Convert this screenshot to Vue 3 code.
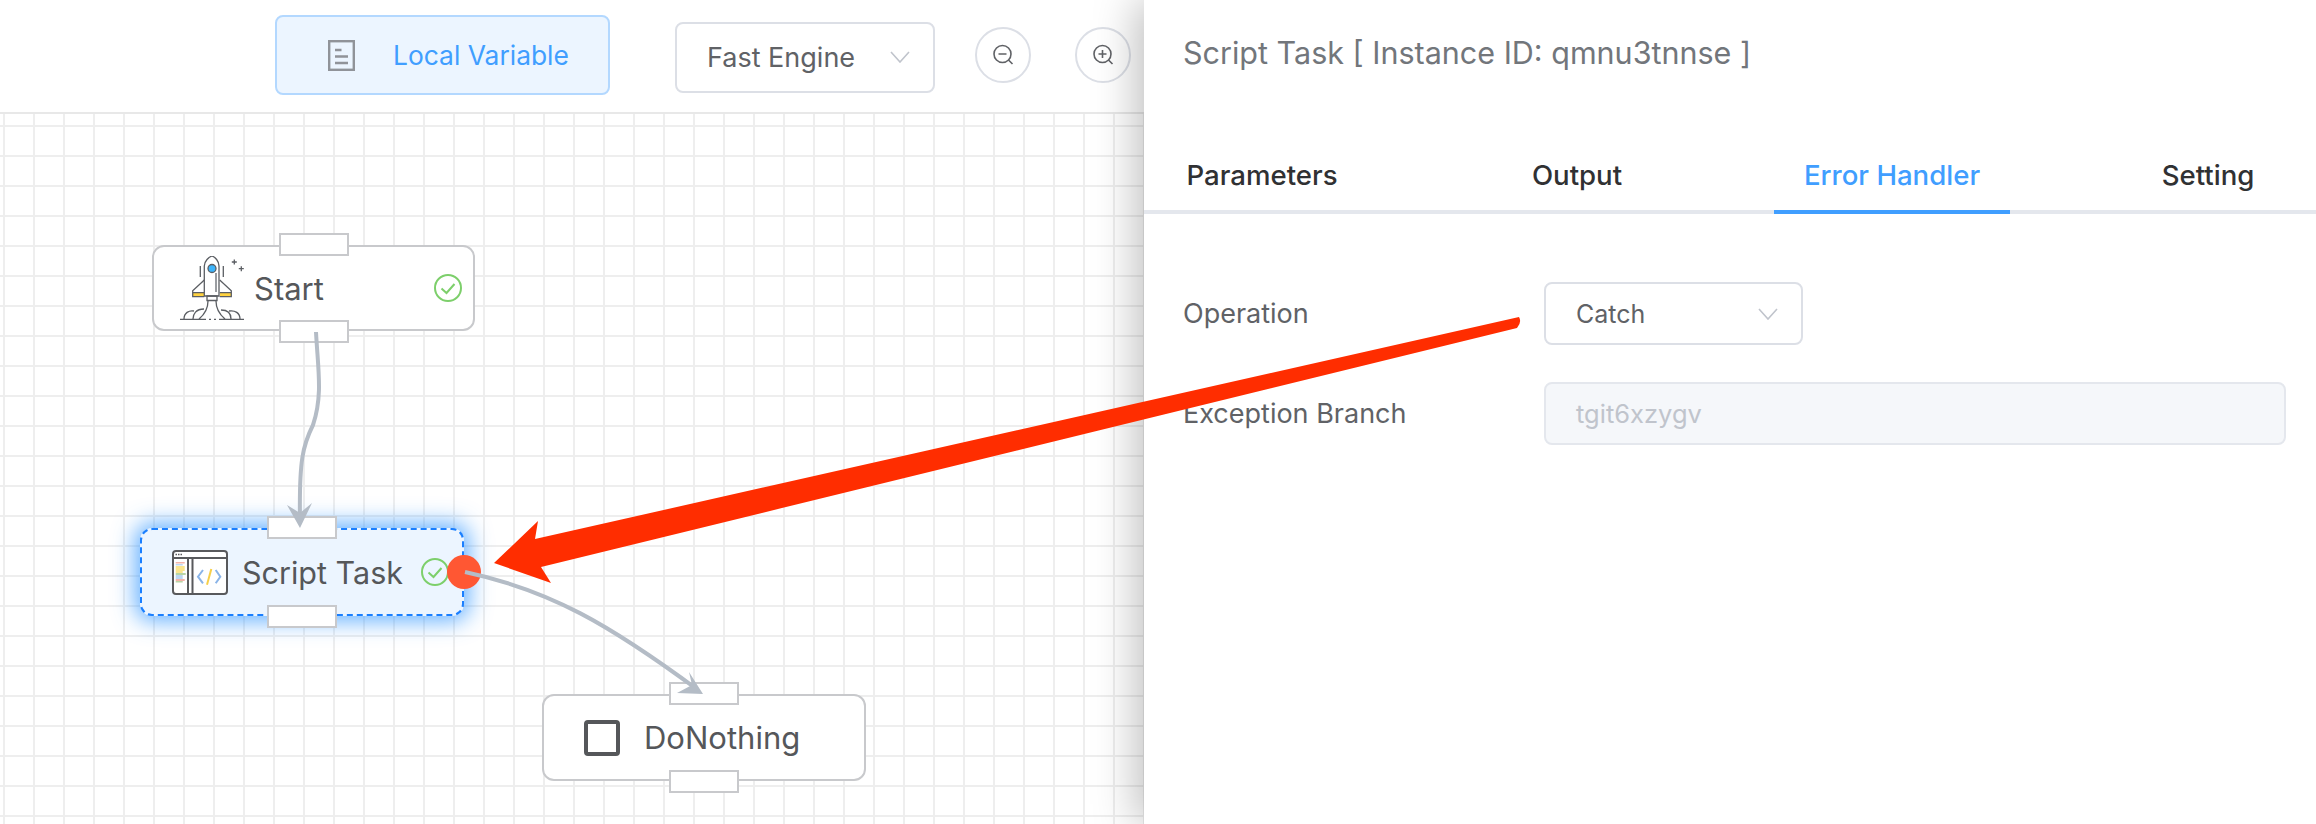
<template>
  <div class="page">
    <header class="toolbar">
      <button class="var-btn">
        <svg class="var-icon" width="27" height="31" viewBox="0 0 27 31" fill="none" stroke="#909399" stroke-width="2.4">
          <rect x="1.2" y="1.2" width="24.6" height="28.6" />
          <path d="M7 10h6.500M7 16.500h13M7 23h13" />
        </svg>
        <span>Local Variable</span>
      </button>
      <div class="select engine">
        <span>Fast Engine</span>
        <svg width="20" height="12" viewBox="0 0 20 12" fill="none" stroke="#c0c4cc" stroke-width="1.6">
          <path d="M1 1l9 10 9-10" />
        </svg>
      </div>
      <div class="round-btn">
        <svg width="22" height="22" viewBox="0 0 22 22" fill="none" stroke="#606266" stroke-width="1.6">
          <circle cx="10.500" cy="10" r="8.500" />
          <path d="M6.500 10h8M16.500 16l4 4" />
        </svg>
      </div>
      <div class="round-btn second">
        <svg width="22" height="22" viewBox="0 0 22 22" fill="none" stroke="#606266" stroke-width="1.6">
          <circle cx="10.500" cy="10" r="8.500" />
          <path d="M6.500 10h8M10.500 6v8M16.500 16l4 4" />
        </svg>
      </div>
    </header>

    <main class="canvas">
      <div class="node start">
        <span class="port top"></span>
        <svg class="node-icon" width="64" height="64" viewBox="0 0 64 64" fill="none" stroke="#5b5e63" stroke-width="1.3">
          <path d="M13 37h11v4H13zM40 37h11v4H40z" fill="#ffd23f" stroke="none" />
          <path d="M24.300 24L12.700 34.700v6h11.600M39.700 24l11.600 10.700v6H39.700" />
          <path d="M24.300 40V10C24.300 5 29 1 32 0c3 1 7 5 7 10v30z" fill="#fff" />
          <path d="M12.700 36.700h11.600M39.700 36.700h11.600" />
          <path d="M36 17v19" stroke-width="2" stroke="#9a9da1" />
          <circle cx="32" cy="12.500" r="4" fill="#3cb4fb" />
          <path d="M20.300 10v11M43.300 10v11M27 40h10v4.500H27zM54.300 3.500v5M51.800 6h5M61.300 10.200v5M58.800 12.700h5" />
          <path d="M28 45c0 8-3 13-9 18M36 45c0 8 3 13 9 18M0 63.300h26M29 63.300h2M34 63.300h2M39 63.300h25" />
          <path d="M4 63c0-6 5-9 10-8M13 63c0-5 3-10 11-10M51 63c0-5-3-9-10-9M60 63c0-6-5-9-11-8" />
        </svg>
        <span class="node-name">Start</span>
        <svg class="check" width="28" height="28" viewBox="0 0 28 28" fill="none" stroke="#7dcf6b" stroke-width="2">
          <circle cx="14" cy="14" r="13" />
          <path d="M7.500 14.500l5 4.500 8-9" />
        </svg>
        <span class="port bottom"></span>
      </div>

      <div class="node task">
        <span class="port top"></span>
        <svg class="node-icon" width="56" height="45" viewBox="0 0 56 45" fill="none" stroke="#58595c" stroke-width="2">
          <rect x="1" y="1" width="54" height="43" rx="3" fill="#fff" />
          <path d="M1 8h54M16 8v36M20.500 8v36" />
          <path d="M3.700 12h9v1.500h-9z" fill="#f4b4a8" stroke="none" />
          <path d="M3.700 14h7v1.500h-7z" fill="#bcd7f3" stroke="none" />
          <path d="M3.700 16h9v5h-9zM3.700 21h7v2h-7z" fill="#fbe58e" stroke="none" />
          <path d="M3.700 23h10v2h-10z" fill="#b9d5a6" stroke="none" />
          <path d="M3.700 25h7v4h-7z" fill="#bcd7f3" stroke="none" />
          <path d="M3.700 29h9v2h-9z" fill="#f4b4a8" stroke="none" />
          <path d="M3.700 31h7v1.500h-7z" fill="#b9d5a6" stroke="none" />
          <path d="M3.500 4.500h1.500M6 4.500h1.500M8.500 4.500h1.500" stroke-width="1.500" />
          <path d="M31 20l-5 6.700 5 6.600M43.700 20l4.600 6.700-4.600 6.600" stroke="#8ab4e8" stroke-width="2" />
          <path d="M39.300 19L35 34.700" stroke="#f6cf4a" stroke-width="2" />
        </svg>
        <span class="node-name">Script Task</span>
        <svg class="check" width="28" height="28" viewBox="0 0 28 28" fill="none" stroke="#7dcf6b" stroke-width="2">
          <circle cx="14" cy="14" r="13" />
          <path d="M7.500 14.500l5 4.500 8-9" />
        </svg>
        <span class="dot"></span>
        <span class="port bottom"></span>
      </div>

      <div class="node nothing">
        <span class="port top"></span>
        <span class="square"></span>
        <span class="node-name">DoNothing</span>
        <span class="port bottom"></span>
      </div>

      <svg class="edges" width="1144" height="710" viewBox="0 114 1144 710" fill="none">
        <path d="M316 332C318 370 323 395 313 425C303 445 299 460 300 520" stroke="#b4bcc6" stroke-width="4" />
        <path d="M300 528L287 505L300 513L312 503z" fill="#b4bcc6" />
        <path d="M465 572C550 590 610 625 698 690" stroke="#b4bcc6" stroke-width="4" />
        <path d="M703 694L677 693L692 685L689 672z" fill="#b4bcc6" />
      </svg>
    </main>

    <aside class="drawer">
      <h2 class="drawer-title">Script Task [ Instance ID: qmnu3tnnse ]</h2>
      <nav class="tabs">
        <div v-for="tab in tabs" :key="tab" class="tab" :class="{ active: tab === activeTab }">{{ tab }}</div>
      </nav>
      <div class="form">
        <div class="form-row">
          <label>Operation</label>
          <div class="select catch">
            <span>Catch</span>
            <svg width="20" height="12" viewBox="0 0 20 12" fill="none" stroke="#c0c4cc" stroke-width="1.6">
              <path d="M1 1l9 10 9-10" />
            </svg>
          </div>
        </div>
        <div class="form-row">
          <label>Exception Branch</label>
          <div class="input-disabled">tgit6xzygv</div>
        </div>
      </div>
    </aside>

    <!-- annotation drawn on top of the screenshot -->
    <svg class="annotation" width="2316" height="824" viewBox="0 0 2316 824">
      <path d="M494 563L538 521L535 539L1519 317Q1522 322 1517 328L541 567L551 583z" fill="#ff2d00" />
    </svg>
  </div>
</template>

<script setup>
const tabs = ['Parameters', 'Output', 'Error Handler', 'Setting']
const activeTab = 'Error Handler'
</script>

<style>
html,
body {
  margin: 0;
  background: #fff;
}
</style>

<style scoped>
.page {
  position: relative;
  width: 2316px;
  height: 824px;
  overflow: hidden;
  font-family: Inter, "Noto Sans", sans-serif;
  color: #606266;
  background: #fff;
}

.toolbar {
  display: flex;
  align-items: center;
  height: 112px;
  padding-left: 275px;
  border-bottom: 2px solid #e8e8e8;
}

.var-btn {
  display: flex;
  align-items: center;
  width: 335px;
  height: 80px;
  margin-top: -2px;
  padding: 0 0 0 51px;
  box-sizing: border-box;
  background: #ecf5ff;
  border: 2px solid #b3d8ff;
  border-radius: 8px;
  color: #409eff;
  font: 400 26.400px Inter, sans-serif;
}

.var-btn span {
  margin-left: 38px;
}

.select {
  display: flex;
  align-items: center;
  justify-content: space-between;
  box-sizing: border-box;
  background: #fff;
  border: 2px solid #dcdfe6;
  border-radius: 8px;
}

.engine {
  width: 260px;
  height: 71px;
  margin: 2px 0 0 65px;
  padding: 0 23px 0 30px;
  font-size: 27px;
}

.round-btn {
  display: flex;
  align-items: center;
  justify-content: center;
  width: 56px;
  height: 56px;
  margin-left: 40px;
  margin-top: -2px;
  box-sizing: border-box;
  border: 2px solid #dcdfe6;
  border-radius: 50%;
}

.round-btn.second {
  margin-left: 44px;
}

.canvas {
  position: relative;
  height: 710px;
  background-image:
    linear-gradient(#eeeeee 2px, transparent 2px),
    linear-gradient(90deg, #eeeeee 2px, transparent 2px);
  background-size: 30px 30px;
  background-position: 3px 11px;
}

.node {
  position: absolute;
  display: flex;
  align-items: center;
  width: 323px;
  height: 86px;
  box-sizing: border-box;
  background: #fff;
  border: 2px solid #c8c9cc;
  border-radius: 12px;
}

.node-name {
  font-size: 31px;
  color: #55575a;
}

.port {
  position: absolute;
  left: 50%;
  width: 70px;
  height: 23px;
  margin-left: -35px;
  box-sizing: border-box;
  background: #fff;
  border: 2px solid #c8c9cc;
}

.port.top {
  top: -14px;
}

.port.bottom {
  bottom: -14px;
}

.start {
  left: 152px;
  top: 131px;
  padding-left: 26px;
}

.start .node-name {
  margin-left: 10px;
}

.start .check {
  margin-left: auto;
  margin-right: 11px;
}

.task {
  left: 140px;
  top: 414px;
  width: 324px;
  height: 88px;
  padding-left: 30px;
  background: #ecf5ff;
  border: 2px dashed #1a7fff;
  box-shadow: 0 0 22px 5px rgba(64, 158, 255, 0.8);
}

.task .node-name {
  margin-left: 14px;
  font-size: 30.500px;
}

.task .check {
  position: absolute;
  right: 13px;
  top: 28px;
}

.dot {
  position: absolute;
  right: -19px;
  top: 25px;
  width: 34px;
  height: 34px;
  border-radius: 50%;
  background: #ff5733;
}

.nothing {
  left: 542px;
  top: 580px;
  width: 324px;
  height: 87px;
  padding-left: 40px;
}

.nothing .node-name {
  margin-left: 24px;
}

.square {
  width: 36px;
  height: 36px;
  box-sizing: border-box;
  border: 4px solid #55575a;
  border-radius: 4px;
}

.edges {
  position: absolute;
  left: 0;
  top: 0;
}

.drawer {
  position: absolute;
  left: 1144px;
  top: 0;
  width: 1172px;
  height: 824px;
  background: #fff;
  box-shadow: -8px 0 40px rgba(0, 0, 0, 0.25);
}

.drawer-title {
  margin: 0;
  padding: 36px 0 0 39px;
  font-size: 30.500px;
  line-height: 34px;
  font-weight: 400;
  color: #72767b;
}

.tabs {
  display: flex;
  gap: 79px;
  height: 144px;
  box-sizing: border-box;
  padding-top: 88px;
  border-bottom: 4px solid #e4e7ed;
}

.tab {
  flex: none;
  width: 236px;
  height: 56px;
  box-sizing: border-box;
  line-height: 34px;
  text-align: center;
  font-size: 27.600px;
  font-weight: 500;
  color: #303133;
}

.tab:last-child {
  width: 227px;
  padding-left: 11px;
}

.tab.active {
  color: #409eff;
  border-bottom: 4px solid #409eff;
}

.form {
  padding: 68px 30px 0 39px;
}

.form-row {
  display: flex;
  align-items: center;
  margin-bottom: 37px;
}

.form-row label {
  width: 361px;
  font-size: 27px;
  color: #606266;
}

.catch {
  width: 259px;
  height: 63px;
  padding: 0 23px 0 30px;
  font-size: 25px;
}

.input-disabled {
  flex: 1;
  height: 63px;
  line-height: 59px;
  padding-left: 30px;
  box-sizing: border-box;
  background: #f5f7fa;
  border: 2px solid #e4e7ed;
  border-radius: 8px;
  font-size: 25.500px;
  color: #c0c4cc;
}

.annotation {
  position: absolute;
  left: 0;
  top: 0;
  pointer-events: none;
}
</style>
